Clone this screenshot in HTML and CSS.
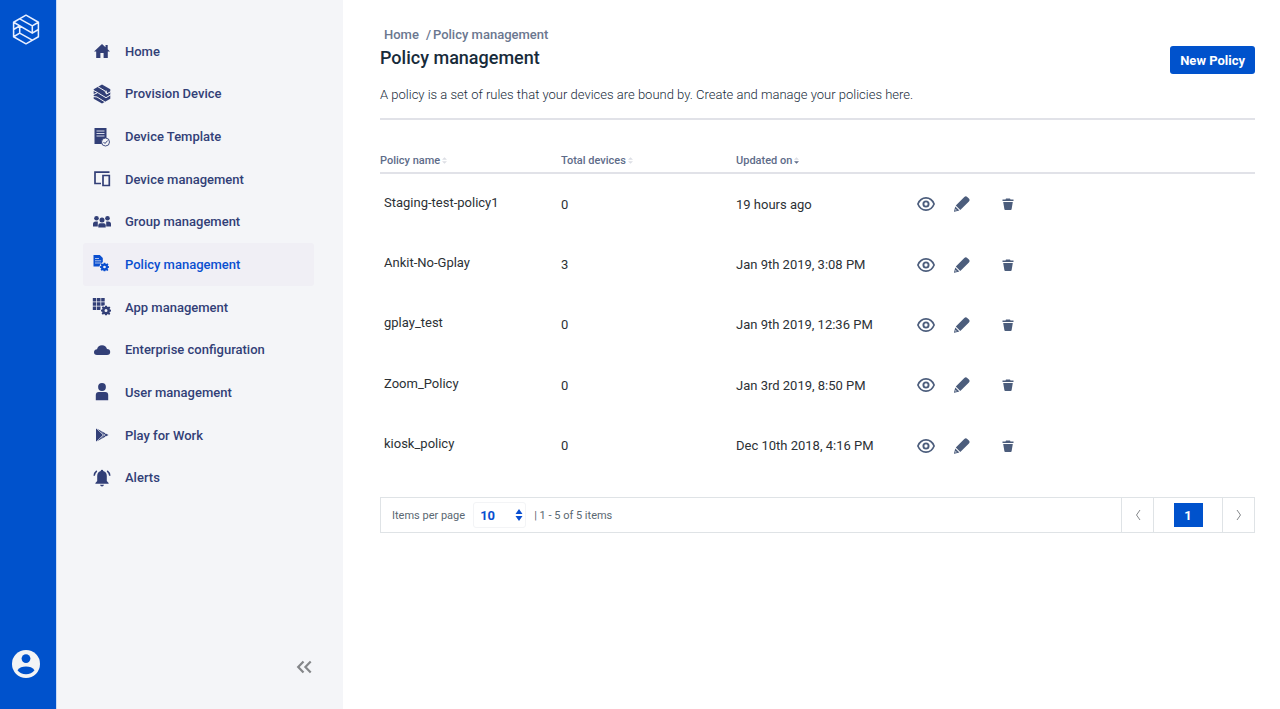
FILE: index.html
```html
<!DOCTYPE html>
<html lang="en">
<head>
<meta charset="utf-8">
<title>Policy management</title>
<link rel="stylesheet" href="styles.css">
</head>
<body>
<svg class="defs" width="0" height="0" aria-hidden="true">
  <symbol id="gear" viewBox="0 0 10 10"><path fill-rule="evenodd" d="M4.1 0h1.8l.3 1.3.8.3L8.200 .9l1.200 1.200L8.600 3.200l.3.8L10 4.200v1.700l-1.200.3-.3.8.8 1.200-1.200 1.200-1.200-.8-.8.3L5.900 10H4.100l-.3-1.200-.8-.3-1.200.8L.6 8.100l.8-1.200-.3-.8L0 5.900V4.200l1.200-.3.3-.8L.8 2 2 .8l1.100.8.8-.3zM5 3.500a1.500 1.500 0 1 0 0 3 1.500 1.500 0 0 0 0-3z"/></symbol>
  <symbol id="eye" viewBox="0 0 18 14"><path fill="none" stroke="currentColor" stroke-width="1.700" d="M.9 7C2.500 3 5.500 .9 9 .9S15.500 3 17.100 7C15.500 11 12.500 13.100 9 13.100S2.500 11 .9 7z"/><circle cx="9" cy="7" r="2.600" fill="none" stroke="currentColor" stroke-width="1.900"/></symbol>
  <symbol id="pencil" viewBox="0 0 16 16"><path d="M10.300 1c1-1 2-1 2.900-.1l1.700 1.700c.9.900.9 1.900 0 2.800L6.300 13.900 1.800 9.500zM1.300 10.400l4.100 4.100-5 1.300c-.3 0-.5-.1-.4-.5zM1.600 13l-.4 1.600 1.600-.4z" fill-rule="evenodd"/></symbol>
  <symbol id="trash" viewBox="0 0 12 12"><path d="M4 .5h4l.5 1H11.500V3H.5V1.500h3zM1.200 4h9.600l-1.200 7.200q-.1.800-.9.800H3.300q-.8 0-.9-.8z"/></symbol>
  <symbol id="sort" viewBox="0 0 6 8"><path class="sort-up" d="M3 0l3 3H0z"/><path d="M0 5h6L3 8z"/></symbol>
</svg>
<div class="app">
  <div class="rail">
    <a href="#" aria-label="Dashboard"><svg width="28" height="31" viewBox="0 0 28 32" fill="none" stroke="#e8efff" stroke-width="1.600" stroke-linejoin="round"><path d="M14 1.200L26.800 8.500v15L14 30.800 1.200 23.500v-15zM1.200 8.500L20.500 19.800 26.800 16M7.500 5L20.500 12.300 26.800 8.500M20.500 12.300v7.500M1.200 16l6.300-3.800M7.500 12.200v7.500M1.200 16v-7.500M1.200 23.500l6.300-3.800L20.500 27"/></svg></a>
    <a href="#" aria-label="Account"><svg width="28" height="28" viewBox="0 0 28 28"><circle cx="14" cy="14" r="14" fill="#f3f4f5"/><circle cx="14" cy="8.600" r="4.400" fill="#0052cc"/><path d="M5.500 20.200c1.800-2.600 4.800-3.600 8.500-3.600s6.700 1 8.500 3.600C20.500 23 17.500 24.300 14 24.300S7.500 23 5.500 20.200z" fill="#0052cc"/></svg></a>
  </div>
  <aside class="sidebar">
    <nav class="nav" aria-label="Main">
      <a href="#"><svg viewBox="0 0 20 20"><path d="M10 3l3.500 3.200V4h2.200v4.200L18 10.500h-2.200V17h-4.200v-5H8.400v5H4.200v-6.500H2z"/></svg>Home</a>
      <a href="#"><svg viewBox="0 0 20 20"><path d="M10 .5l8.300 4.700v9.600L10 19.500l-8.300-4.700V5.200z"/><path d="M5.500 2.500l7.500 4.500 1.500 3 4.500-2.500M1 6.200l5.500 3 7.500 4.500 5-3M1 10.800l4-1.800M1 12.500l4 .5 8 5M14 6.500l1 3.500" fill="none" stroke="#f4f5f8" stroke-width="1"/></svg>Provision Device</a>
      <a href="#"><svg viewBox="0 0 20 20"><path d="M2.500 1h12v16h-12z"/><path d="M4.500 4h8M4.500 6.500h8M4.500 9h8" stroke="#d5d9e8"/><circle cx="13.500" cy="15" r="4" fill="#f4f5f8" stroke="currentColor" stroke-width=".9"/><path d="M11.500 15l1.500 1.500 2.700-3" fill="none" stroke="currentColor"/></svg>Device Template</a>
      <a href="#"><svg viewBox="0 0 20 20" fill="none" stroke="currentColor" stroke-width="1.700"><path d="M17.500 3.200H3V14.500h6M11 6.500h6.300v10H11z"/></svg>Device management</a>
      <a href="#"><svg viewBox="0 0 20 20"><circle cx="4.500" cy="6.300" r="2.300"/><circle cx="15.500" cy="6.300" r="2.300"/><path d="M1 14.500v-2.500q0-2.600 2.600-2.600h2.200V14.500zM19 14.500v-2.500q0-2.600-2.600-2.600h-2.200V14.500z"/><path d="M6.300 15.600v-2.400q0-2 2-2h3.400q2 0 2 2v2.400z"/><circle cx="10" cy="8" r="2.500"/></svg>Group management</a>
      <a href="#" class="active" aria-current="page"><svg viewBox="0 0 20 20"><path d="M1.500 1h6.300l3 3v8.500H1.500z"/><path d="M3 4.500h4M3 6.800h6.200M3 9h6.200" stroke="#f0eff5" stroke-width=".7"/><circle cx="12.500" cy="13" r="5" fill="#f0eff5"/><use href="#gear" x="8" y="8.500" width="9" height="9"/></svg>Policy management</a>
      <a href="#"><svg viewBox="0 0 20 20"><path d="M.8 1h3.500v3.500H.8zM5 1h3.500v3.500H5zM9.200 1h3.500v3.500H9.200zM.8 5.200h3.500v3.500H.8zM5 5.200h3.500v3.500H5zM9.200 5.200h3.500v3.500H9.200zM.8 9.400h3.500v3.500H.8zM5 9.400h3.500v3.500H5z"/><circle cx="14" cy="13.500" r="5.500" fill="#f4f5f8"/><use href="#gear" x="9" y="8.500" width="10" height="10"/></svg>App management</a>
      <a href="#"><svg viewBox="0 0 20 20"><path d="M5 15q-3-.1-3-2.800 0-2.500 3-2.900Q6 5.200 10 5.200q4 0 5 3.900 3.200.2 3.200 3T15 15z"/></svg>Enterprise configuration</a>
      <a href="#"><svg viewBox="0 0 20 20"><circle cx="10" cy="5" r="3.900"/><path d="M3.800 18.300v-5.300q0-3 3-3h6.400q3 0 3 3v5.300z"/></svg>User management</a>
      <a href="#"><svg viewBox="0 0 20 20"><path d="M4 3.200L16.500 10 4 16.800z"/><path d="M4 3l7 7-7 7M9 6.500L14 12M9 13.500L14 8" fill="none" stroke="#f4f5f8" stroke-width=".6"/></svg>Play for Work</a>
      <a href="#"><svg viewBox="0 0 20 20"><path d="M10 1.800q1.200 0 1.300 1.300 3.500 1 3.500 5V13l1.800 2v.8H3.400V15l1.800-2V8.100q0-4 3.500-5Q8.800 1.800 10 1.800zM8 16.800h4q-.4 1.600-2 1.600t-2-1.600z"/><path d="M2.200 7.800q.2-3.200 2.600-5M17.800 7.800q-.2-3.200-2.600-5" fill="none" stroke="currentColor" stroke-width="1.500"/></svg>Alerts</a>
    </nav>
    <button class="collapse" aria-label="Collapse menu"><svg width="16" height="14" viewBox="0 0 16 14" fill="none" stroke="currentColor" stroke-width="2.200"><path d="M7.500 1.500L2.200 7l5.300 5.500M14.700 1.500L9.400 7l5.300 5.500"/></svg></button>
  </aside>
  <main class="main">
    <header class="head">
      <div>
        <nav class="crumbs" aria-label="Breadcrumb"><a href="#">Home</a><span>/</span><a href="#">Policy management</a></nav>
        <h1>Policy management</h1>
        <p>A policy is a set of rules that your devices are bound by. Create and manage your policies here.</p>
      </div>
      <button class="primary">New Policy</button>
    </header>
    <table class="policies">
      <colgroup><col class="c-name"><col class="c-total"><col class="c-date"><col></colgroup>
      <thead><tr>
        <th scope="col">Policy name<svg class="sort"><use href="#sort"/></svg></th>
        <th scope="col">Total devices<svg class="sort"><use href="#sort"/></svg></th>
        <th scope="col" aria-sort="descending">Updated on<svg class="sort sorted"><use href="#sort"/></svg></th>
        <th aria-label="Actions"></th>
      </tr></thead>
      <tbody>
        <tr><td class="name">Staging-test-policy1</td><td>0</td><td>19 hours ago</td><td><div class="actions"><button aria-label="View"><svg class="eye"><use href="#eye"/></svg></button><button aria-label="Edit"><svg class="pencil"><use href="#pencil"/></svg></button><button class="delete" aria-label="Delete"><svg class="trash"><use href="#trash"/></svg></button></div></td></tr>
        <tr><td class="name">Ankit-No-Gplay</td><td>3</td><td>Jan 9th 2019, 3:08 PM</td><td><div class="actions"><button aria-label="View"><svg class="eye"><use href="#eye"/></svg></button><button aria-label="Edit"><svg class="pencil"><use href="#pencil"/></svg></button><button class="delete" aria-label="Delete"><svg class="trash"><use href="#trash"/></svg></button></div></td></tr>
        <tr><td class="name">gplay_test</td><td>0</td><td>Jan 9th 2019, 12:36 PM</td><td><div class="actions"><button aria-label="View"><svg class="eye"><use href="#eye"/></svg></button><button aria-label="Edit"><svg class="pencil"><use href="#pencil"/></svg></button><button class="delete" aria-label="Delete"><svg class="trash"><use href="#trash"/></svg></button></div></td></tr>
        <tr><td class="name">Zoom_Policy</td><td>0</td><td>Jan 3rd 2019, 8:50 PM</td><td><div class="actions"><button aria-label="View"><svg class="eye"><use href="#eye"/></svg></button><button aria-label="Edit"><svg class="pencil"><use href="#pencil"/></svg></button><button class="delete" aria-label="Delete"><svg class="trash"><use href="#trash"/></svg></button></div></td></tr>
        <tr><td class="name">kiosk_policy</td><td>0</td><td>Dec 10th 2018, 4:16 PM</td><td><div class="actions"><button aria-label="View"><svg class="eye"><use href="#eye"/></svg></button><button aria-label="Edit"><svg class="pencil"><use href="#pencil"/></svg></button><button class="delete" aria-label="Delete"><svg class="trash"><use href="#trash"/></svg></button></div></td></tr>
      </tbody>
    </table>
    <footer class="pager">
      <label for="size">Items per page</label>
      <span class="select"><select id="size"><option>10</option><option>25</option><option>50</option></select><svg width="8" height="12" viewBox="0 0 8 12" aria-hidden="true"><path d="M4 0l3.500 5h-7zM.5 7h7L4 12z"/></svg></span>
      <span class="range">| 1 - 5 of 5 items</span>
      <button class="step" aria-label="Previous page"><svg width="6" height="12" viewBox="0 0 6 12" fill="none" stroke="currentColor"><path d="M5 1L1.500 6 5 11"/></svg></button>
      <div class="pages"><button aria-current="page">1</button></div>
      <button class="step" aria-label="Next page"><svg width="6" height="12" viewBox="0 0 6 12" fill="none" stroke="currentColor"><path d="M1 1l3.500 5L1 11"/></svg></button>
    </footer>
  </main>
</div>
</body>
</html>
```
FILE: styles.css
```css
* { box-sizing: border-box; }
body { margin: 0; font-family: Roboto, "Noto Sans", sans-serif; font-size: 13px; color: #2c3135; background: #fff; }
svg { fill: currentColor; flex: none; }
svg[fill="none"] { fill: none; }
a { color: inherit; text-decoration: none; }
button { font: inherit; color: inherit; border: 0; padding: 0; background: none; cursor: pointer; }
.defs { position: absolute; }
.app { display: flex; min-height: 100vh; }
.rail { width: 57px; padding: 14px 5px 31px 0; background: #0052cc; border-right: 1px solid #c9dbf7; display: flex; flex-direction: column; align-items: center; justify-content: space-between; }
.rail a { display: flex; }
.sidebar { width: 286px; padding: 30px 29px 35px 26px; background: #f4f5f8; display: flex; flex-direction: column; justify-content: space-between; }
.nav { display: grid; grid-auto-rows: 1fr; height: 469px; }
.nav a { display: flex; align-items: center; gap: 13px; padding-left: 9px; border-radius: 3px; font-weight: 500; color: #323f77; }
.nav svg { width: 20px; height: 20px; }
.nav .active { background: #f0eff5; color: #0a4fd0; }
.collapse { align-self: flex-end; color: #848689; display: flex; margin-right: 2px; }
.main { flex: 1; min-width: 0; padding: 27px 25px 0 37px; }
.head { display: flex; justify-content: space-between; align-items: flex-start; padding-bottom: 14px; border-bottom: 2px solid #e1e2e8; }
.head .crumbs { display: flex; padding-left: 4px; font-weight: 500; line-height: 16px; color: #6b778f; }
.crumbs span { margin: 0 2px 0 7px; }
h1 { margin: 3px 0 0; font-size: 18px; line-height: 24px; font-weight: 500; color: #172b3a; }
.head p { margin: 16px 0 0; line-height: 18px; font-weight: 300; color: #172b3a; }
.primary { margin-top: 19px; height: 28px; padding: 0 10px; border-radius: 3px; background: #0052cc; color: #fff; font-weight: 700; }
.policies { width: 100%; height: 327px; margin-top: 29px; border-collapse: separate; border-spacing: 0; table-layout: fixed; }
.c-name { width: 181px; }
.c-total { width: 175px; }
.c-date { width: 181px; }
th { height: 25px; padding: 0; text-align: left; font-size: 11px; font-weight: 500; color: #5e6c89; border-bottom: 2px solid #e1e2e8; }
td { height: 60px; padding: 0; }
td.name { padding: 0 0 4px 4px; }
.sort { width: 5px; height: 7px; margin-left: 2px; color: #dcdee4; }
.sort-up { fill: #dcdee4; }
.sorted { color: #5e6c89; }
.actions { display: flex; align-items: center; color: #4c5d7c; }
.actions button { display: flex; }
.eye { width: 18px; height: 14px; }
.pencil { width: 16px; height: 16px; margin-left: 19px; }
.trash { width: 12px; height: 12px; }
.delete { margin-left: 32px; }
.pager { display: flex; align-items: center; height: 36px; margin-top: 21px; padding-left: 11px; border: 1px solid #dfe3e6; font-size: 11px; color: #5a6872; }
.select { display: flex; align-items: center; width: 53px; height: 26px; margin: 0 8px; padding: 0 2px 0 6px; border: 1px solid #f3f4f6; border-radius: 3px; color: #0a4fd0; }
select { flex: 1; min-width: 0; appearance: none; border: 0; padding: 0; background: none; font: inherit; font-size: 13px; font-weight: 700; color: inherit; }
.range { flex: 1; }
.step { align-self: stretch; width: 32px; display: flex; align-items: center; justify-content: center; border-left: 1px solid #dfe3e6; color: #85888b; }
.pages { align-self: stretch; width: 69px; display: flex; align-items: center; justify-content: center; border-left: 1px solid #dfe3e6; }
.pages button { width: 29px; height: 24px; background: #0052cc; color: #fff; font-size: 13px; font-weight: 700; }
```
